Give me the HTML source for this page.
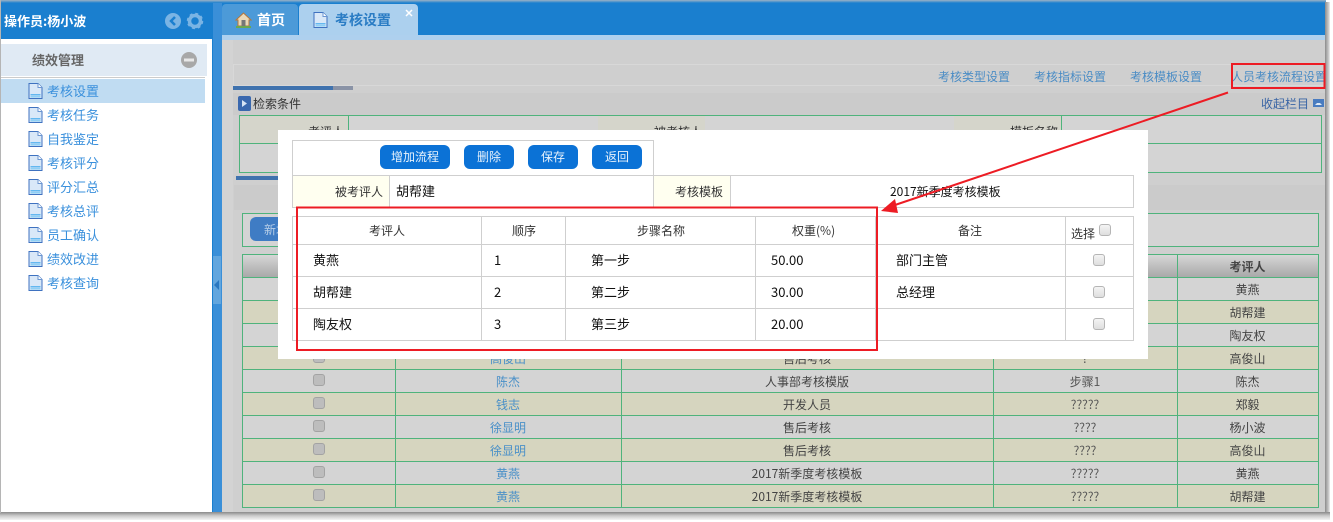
<!DOCTYPE html>
<html><head><meta charset="utf-8"><style>
*{margin:0;padding:0;box-sizing:border-box}
html,body{width:1333px;height:522px;overflow:hidden;background:#fff}
body{position:relative;font:12px "WenQuanYi Zen Hei","Noto Sans CJK SC","Liberation Sans",sans-serif;color:#333}
.a{position:absolute}
.t{position:absolute;white-space:nowrap}
.v{position:absolute;width:1px}
.h{position:absolute;height:1px}
.g{background:#4fb37c}
.l{background:#cfcfcf}
.c{position:absolute;width:12px;height:12px;border-radius:3px;background:#bdbdbd;border:1px solid #a3a3a3}
.m{position:absolute;width:12px;height:12px;border-radius:3px;background:linear-gradient(#f4f4f4,#dedede);border:1px solid #b5b5b5}
.mi{position:absolute;left:47px;font-size:13px;color:#3a90dc;letter-spacing:0;line-height:16px}
.b{position:absolute;top:145px;height:24px;background:#0b72d6;border-radius:6px;color:#e8f2fc;text-align:center;line-height:24px;font-size:12px}
.r{position:absolute;left:243px;width:1075px;height:22px}
.x{position:absolute;text-align:center;line-height:26px;height:23px;white-space:nowrap}
.n{left:395px;width:226px;color:#4a90c8}
.p{left:621px;width:372px;color:#444}
.s{left:993px;width:184px;color:#555}
.e{left:1177px;width:141px;color:#444}
.q{font-size:13px;color:#111}
</style></head><body>
<svg width="0" height="0" style="position:absolute"><defs>
<symbol id="doc" viewBox="0 0 15 16"><path d="M1 .5H10L14 4.5V15.5H1Z" fill="#d9e8f8" stroke="#3f72c0"/><path d="M10 .5V4.5H14" fill="#fff" stroke="#6b96d2"/><rect x="2.500" y="11" width="10" height="1.500" fill="#63b8f0"/><rect x="2.500" y="13" width="10" height="1.500" fill="#8fd0f5"/></symbol>
</defs></svg>

<!-- window frame -->
<div class="a" style="left:0;top:0;width:1326px;height:513px;background:#cfcfcf"></div>
<div class="a" style="left:0;top:0;width:1326px;height:3px;background:linear-gradient(#9db3c6,#1a7fcf)"></div>
<div class="a" style="left:1325px;top:2px;width:5px;height:514px;background:linear-gradient(90deg,#8c8c8c,#c8c8c8 70%,#eee)"></div>
<div class="a" style="left:0;top:512px;width:1330px;height:8px;background:linear-gradient(#8a8a8a,#c9c9c9 45%,#f4f4f4)"></div>
<div class="a" style="left:0;top:0;width:1px;height:513px;background:#b5b5b5"></div>

<!-- sidebar -->
<div class="a" style="left:1px;top:39px;width:211px;height:473px;background:#fff"></div>
<div class="a" style="left:1px;top:3px;width:211px;height:36px;background:#1a7fcf"></div>
<div class="t" style="left:4px;top:13px;color:#fff;font-size:13px;font-weight:bold;line-height:16px">操作员:杨小波</div>
<svg class="a" style="left:164px;top:12px" width="42" height="18"><circle cx="9" cy="9" r="8" fill="#7ab4e4"/><path d="M11 5L7 9L11 13" fill="none" stroke="#1a7fcf" stroke-width="2.500"/><circle cx="31" cy="9" r="5.500" fill="none" stroke="#7ab4e4" stroke-width="3.500"/><circle cx="31" cy="9" r="7" fill="none" stroke="#7ab4e4" stroke-width="2.500" stroke-dasharray="2.800 2.700"/></svg>
<div class="a" style="left:1px;top:44px;width:206px;height:32px;background:#e0eaf4"></div>
<div class="a" style="left:1px;top:77px;width:204px;height:1px;background:#ccc"></div>
<div class="t" style="left:32px;top:52px;font-size:13px;font-weight:bold;color:#666;line-height:16px">绩效管理</div>
<svg class="a" style="left:181px;top:52px" width="16" height="16"><circle cx="8" cy="8" r="8" fill="#a8a8a8"/><rect x="3" y="6.500" width="10" height="3" fill="#e8e8e8"/></svg>
<div class="a" style="left:1px;top:79px;width:204px;height:24px;background:#c0dcf2"></div>
<svg class="a" style="left:28px;top:83px" width="15" height="16"><use href="#doc"/></svg><div class="mi" style="top:83px">考核设置</div>
<svg class="a" style="left:28px;top:107px" width="15" height="16"><use href="#doc"/></svg><div class="mi" style="top:107px">考核任务</div>
<svg class="a" style="left:28px;top:131px" width="15" height="16"><use href="#doc"/></svg><div class="mi" style="top:131px">自我鉴定</div>
<svg class="a" style="left:28px;top:155px" width="15" height="16"><use href="#doc"/></svg><div class="mi" style="top:155px">考核评分</div>
<svg class="a" style="left:28px;top:179px" width="15" height="16"><use href="#doc"/></svg><div class="mi" style="top:179px">评分汇总</div>
<svg class="a" style="left:28px;top:203px" width="15" height="16"><use href="#doc"/></svg><div class="mi" style="top:203px">考核总评</div>
<svg class="a" style="left:28px;top:227px" width="15" height="16"><use href="#doc"/></svg><div class="mi" style="top:227px">员工确认</div>
<svg class="a" style="left:28px;top:251px" width="15" height="16"><use href="#doc"/></svg><div class="mi" style="top:251px">绩效改进</div>
<svg class="a" style="left:28px;top:275px" width="15" height="16"><use href="#doc"/></svg><div class="mi" style="top:275px">考核查询</div>

<!-- splitter -->
<div class="a" style="left:212px;top:3px;width:10px;height:509px;background:#3a8fd8;border-left:1px solid #1a7fcf"></div>
<div class="a" style="left:213px;top:256px;width:8px;height:48px;background:#62a6de"></div>
<svg class="a" style="left:214px;top:280px" width="6" height="10"><path d="M5 0V10L0 5Z" fill="#2a78c0"/></svg>

<!-- tabs -->
<div class="a" style="left:222px;top:3px;width:1103px;height:32px;background:#1a7fcf"></div>
<div class="a" style="left:222px;top:35px;width:1103px;height:5px;background:#aed0ee"></div>
<div class="a" style="left:222px;top:4px;width:76px;height:31px;background:#4c9ad8;border-radius:4px 4px 0 0"></div>
<div class="a" style="left:299px;top:4px;width:119px;height:31px;background:#acd0ee;border-radius:4px 4px 0 0"></div>
<svg class="a" style="left:235px;top:12px" width="17" height="16"><path d="M8.500 1L1 8H3V14H14V8H16Z" fill="#e9d8b8" stroke="#b5763a"/><rect x="6.500" y="8" width="4" height="6" fill="#777"/><rect x="1" y="14" width="15" height="2" fill="#6aa84f"/></svg>
<div class="t" style="left:257px;top:11px;font-size:14px;font-weight:bold;color:#fff;line-height:18px">首页</div>
<svg class="a" style="left:313px;top:12px" width="15" height="16"><use href="#doc"/></svg>
<div class="t" style="left:335px;top:11px;font-size:14px;font-weight:bold;color:#2a7cc4;line-height:18px">考核设置</div>
<svg class="a" style="left:405px;top:9px" width="8" height="8"><path d="M1 1L7 7M7 1L1 7" stroke="#fff" stroke-width="1.500"/></svg>

<!-- content -->
<div class="a" style="left:222px;top:40px;width:11px;height:472px;background:#d3d3d3"></div>
<div class="a" style="left:233px;top:64px;width:1092px;height:22px;border:1px solid #d8d8d8;border-right:0"></div>
<div class="t" style="left:938px;top:69px;color:#4a8cc5;line-height:15px">考核类型设置</div>
<div class="t" style="left:1034px;top:69px;color:#4a8cc5;line-height:15px">考核指标设置</div>
<div class="t" style="left:1130px;top:69px;color:#4a8cc5;line-height:15px">考核模板设置</div>
<div class="a" style="left:1231px;top:64px;width:94px;height:24px;overflow:hidden"><div class="t" style="left:0;top:5px;color:#4a8cc5;line-height:15px">人员考核流程设置</div></div>
<div class="a" style="left:233px;top:86px;width:100px;height:4px;background:#3f72ae"></div>
<div class="a" style="left:333px;top:86px;width:20px;height:4px;background:#8a93a6"></div>
<div class="a" style="left:233px;top:93px;width:1092px;height:22px;background:#cbcbcb"></div>
<svg class="a" style="left:238px;top:96px" width="13" height="15"><rect width="13" height="15" rx="2" fill="#3a68ae"/><path d="M4 4L9 7.500L4 11Z" fill="#d7e4f4"/></svg>
<div class="t" style="left:253px;top:96px;color:#333;line-height:15px">检索条件</div>
<div class="t" style="left:1261px;top:96px;color:#3a65a5;line-height:15px">收起栏目</div>
<svg class="a" style="left:1313px;top:99px" width="11" height="8"><rect width="11" height="8" fill="#4a7cc0"/><path d="M2 6L4 4H7L9 6Z" fill="#dfeaf6"/></svg>

<!-- search table -->
<div class="a" style="left:239px;top:115px;width:1083px;height:58px;background:#d4d4d4;border:1px solid #4fb37c"></div>
<div class="a" style="left:240px;top:116px;width:108px;height:27px;background:#d5d5cb"></div>
<div class="a" style="left:598px;top:116px;width:107px;height:27px;background:#d5d5cb"></div>
<div class="a" style="left:954px;top:116px;width:107px;height:27px;background:#d5d5cb"></div>
<div class="h g" style="left:240px;top:143px;width:1081px"></div>
<div class="v g" style="left:348px;top:116px;height:56px"></div>
<div class="v g" style="left:1061px;top:116px;height:27px"></div>
<div class="t" style="right:989px;top:124px;color:#333;line-height:15px">考评人</div>
<div class="t" style="right:631px;top:124px;color:#333;line-height:15px">被考核人</div>
<div class="t" style="right:275px;top:124px;color:#333;line-height:15px">模板名称</div>
<div class="a" style="left:236px;top:176px;width:100px;height:4px;background:#3f72ae"></div>
<div class="a" style="left:234px;top:185px;width:1091px;height:25px;background:#cbcbcb"></div>

<!-- toolbar -->
<div class="a" style="left:242px;top:213px;width:1077px;height:34px;background:#d4d4d4;border:1px solid #4fb37c"></div>
<div class="a" style="left:250px;top:217px;width:60px;height:24px;background:#3f7cc4;border-radius:6px"></div>
<div class="t" style="left:264px;top:222px;color:#b8cfe8;line-height:15px">新增</div>

<!-- data table -->
<div class="a" style="left:242px;top:254px;width:1077px;height:254px;background:#4fb37c"></div>
<div class="a" style="left:243px;top:255px;width:1075px;height:22px;background:linear-gradient(#d6d6d6,#a9a9a9)"></div>
<div class="r" style="top:278px;background:#d4d4d4"></div>
<div class="r" style="top:301px;background:#d6d5bf"></div>
<div class="r" style="top:324px;background:#d4d4d4"></div>
<div class="r" style="top:347px;background:#d6d5bf"></div>
<div class="r" style="top:370px;background:#d4d4d4"></div>
<div class="r" style="top:393px;background:#d6d5bf"></div>
<div class="r" style="top:416px;background:#d4d4d4"></div>
<div class="r" style="top:439px;background:#d6d5bf"></div>
<div class="r" style="top:462px;background:#d4d4d4"></div>
<div class="r" style="top:485px;background:#d6d5bf"></div>
<div class="v g" style="left:395px;top:254px;height:254px"></div>
<div class="v g" style="left:621px;top:254px;height:254px"></div>
<div class="v g" style="left:993px;top:254px;height:254px"></div>
<div class="v g" style="left:1177px;top:254px;height:254px"></div>
<div class="x e" style="top:254px;font-weight:bold;color:#444">考评人</div>
<div class="x e" style="top:277px">黄燕</div>
<div class="x e" style="top:300px">胡帮建</div>
<div class="x e" style="top:323px">陶友权</div>
<div class="x e" style="top:346px">高俊山</div>
<div class="c" style="left:313px;top:351px"></div>
<div class="x n" style="top:346px">高俊山</div>
<div class="x p" style="top:346px">售后考核</div>
<div class="x s" style="top:346px">?</div>

<div class="c" style="left:313px;top:374px"></div><div class="x n" style="top:369px">陈杰</div><div class="x p" style="top:369px">人事部考核模版</div><div class="x s" style="top:369px">步骤1</div><div class="x e" style="top:369px">陈杰</div>
<div class="c" style="left:313px;top:397px"></div><div class="x n" style="top:392px">钱志</div><div class="x p" style="top:392px">开发人员</div><div class="x s" style="top:392px">?????</div><div class="x e" style="top:392px">郑毅</div>
<div class="c" style="left:313px;top:420px"></div><div class="x n" style="top:415px">徐显明</div><div class="x p" style="top:415px">售后考核</div><div class="x s" style="top:415px">????</div><div class="x e" style="top:415px">杨小波</div>
<div class="c" style="left:313px;top:443px"></div><div class="x n" style="top:438px">徐显明</div><div class="x p" style="top:438px">售后考核</div><div class="x s" style="top:438px">????</div><div class="x e" style="top:438px">高俊山</div>
<div class="c" style="left:313px;top:466px"></div><div class="x n" style="top:461px">黄燕</div><div class="x p" style="top:461px">2017新季度考核模板</div><div class="x s" style="top:461px">?????</div><div class="x e" style="top:461px">黄燕</div>
<div class="c" style="left:313px;top:489px"></div><div class="x n" style="top:484px">黄燕</div><div class="x p" style="top:484px">2017新季度考核模板</div><div class="x s" style="top:484px">?????</div><div class="x e" style="top:484px">胡帮建</div>

<!-- modal -->
<div class="a" style="left:278px;top:130px;width:870px;height:229px;background:#fff"></div>
<div class="a" style="left:292px;top:140px;width:362px;height:36px;border:1px solid #cfcfcf"></div>
<div class="a" style="left:293px;top:176px;width:96px;height:31px;background:#fffff0"></div>
<div class="a" style="left:654px;top:176px;width:76px;height:31px;background:#fffff0"></div>
<div class="a" style="left:292px;top:175px;width:842px;height:33px;border:1px solid #cfcfcf"></div>
<div class="v l" style="left:389px;top:175px;height:33px"></div>
<div class="v l" style="left:653px;top:175px;height:33px"></div>
<div class="v l" style="left:730px;top:175px;height:33px"></div>
<div class="b" style="left:380px;width:70px">增加流程</div>
<div class="b" style="left:464px;width:50px">删除</div>
<div class="b" style="left:528px;width:50px">保存</div>
<div class="b" style="left:592px;width:50px">返回</div>
<div class="t" style="left:335px;top:184px;color:#333;line-height:15px">被考评人</div>
<div class="t q" style="left:396px;top:183px;line-height:16px">胡帮建</div>
<div class="t" style="left:675px;top:184px;color:#333;line-height:15px">考核模板</div>
<div class="t" style="left:890px;top:184px;color:#111;line-height:15px">2017新季度考核模板</div>

<div class="a" style="left:292px;top:216px;width:842px;height:125px;border:1px solid #cfcfcf"></div>
<div class="h l" style="left:292px;top:244px;width:842px"></div>
<div class="h l" style="left:292px;top:276px;width:842px"></div>
<div class="h l" style="left:292px;top:308px;width:842px"></div>
<div class="v l" style="left:481px;top:216px;height:125px"></div>
<div class="v l" style="left:565px;top:216px;height:125px"></div>
<div class="v l" style="left:755px;top:216px;height:125px"></div>
<div class="v l" style="left:875px;top:216px;height:125px"></div>
<div class="v l" style="left:1065px;top:216px;height:125px"></div>
<div class="t" style="left:369px;top:223px;line-height:15px">考评人</div>
<div class="t" style="left:512px;top:223px;line-height:15px">顺序</div>
<div class="t" style="left:637px;top:223px;line-height:15px">步骤名称</div>
<div class="t" style="left:792px;top:223px;line-height:15px">权重(%)</div>
<div class="t" style="left:958px;top:223px;line-height:15px">备注</div>
<div class="t" style="left:1071px;top:226px;line-height:15px">选择</div>
<div class="m" style="left:1099px;top:224px"></div>

<div class="t q" style="left:313px;top:252px;line-height:16px">黄燕</div>
<div class="t q" style="left:494px;top:252px;line-height:16px">1</div>
<div class="t q" style="left:591px;top:252px;line-height:16px">第一步</div>
<div class="t q" style="left:771px;top:252px;line-height:16px">50.00</div>
<div class="t q" style="left:896px;top:252px;line-height:16px">部门主管</div>
<div class="m" style="left:1093px;top:254px"></div>

<div class="t q" style="left:313px;top:284px;line-height:16px">胡帮建</div>
<div class="t q" style="left:494px;top:284px;line-height:16px">2</div>
<div class="t q" style="left:591px;top:284px;line-height:16px">第二步</div>
<div class="t q" style="left:771px;top:284px;line-height:16px">30.00</div>
<div class="t q" style="left:896px;top:284px;line-height:16px">总经理</div>
<div class="m" style="left:1093px;top:286px"></div>

<div class="t q" style="left:313px;top:316px;line-height:16px">陶友权</div>
<div class="t q" style="left:494px;top:316px;line-height:16px">3</div>
<div class="t q" style="left:591px;top:316px;line-height:16px">第三步</div>
<div class="t q" style="left:771px;top:316px;line-height:16px">20.00</div>
<div class="m" style="left:1093px;top:318px"></div>

<!-- annotations -->
<svg class="a" style="left:0;top:0" width="1333" height="522">
<rect x="297" y="207.500" width="580" height="142.500" fill="none" stroke="#ed1c24" stroke-width="2"/>
<rect x="1232" y="64" width="92.500" height="24" fill="none" stroke="#ed1c24" stroke-width="2"/>
<path d="M1228 92.500L892 206" stroke="#ed1c24" stroke-width="2" fill="none"/>
<path d="M881 211L895 199L898 213Z" fill="#ed1c24"/>
</svg>
</body></html>
